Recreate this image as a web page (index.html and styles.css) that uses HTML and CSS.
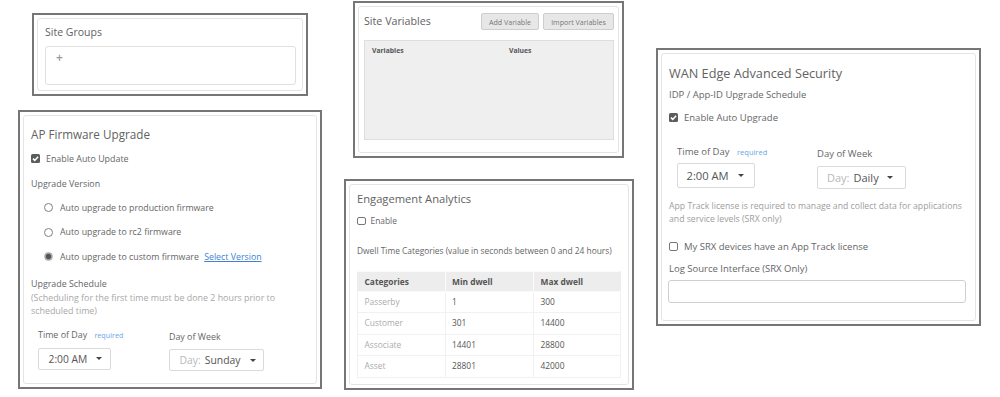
FILE: index.html
```html
<!DOCTYPE html>
<html lang="en">
<head>
<meta charset="utf-8">
<title>Site settings</title>
<link rel="stylesheet" href="styles.css">
</head>
<body>
<div class="canvas">

  <section class="shot shot-groups">
    <div class="card card-groups">
      <h2 class="title title-groups">Site Groups</h2>
      <div class="group-box"><span class="plus">+</span></div>
    </div>
  </section>

  <section class="shot shot-firmware">
    <div class="card card-firmware">
      <h2 class="title title-firmware">AP Firmware Upgrade</h2>
      <label class="check-row fw-check">
        <span class="cb cb-on"><svg viewBox="0 0 10 10"><path d="M2.2 5.1 L4.2 7.1 L7.9 3" stroke="#fff" stroke-width="1.7" fill="none"/></svg></span>
        <span>Enable Auto Update</span>
      </label>
      <div class="text-row">Upgrade Version</div>
      <div class="radio-list">
        <label class="radio-row"><span class="radio"></span><span>Auto upgrade to production firmware</span></label>
        <label class="radio-row"><span class="radio"></span><span>Auto upgrade to rc2 firmware</span></label>
        <label class="radio-row"><span class="radio radio-on"></span><span>Auto upgrade to custom firmware <a class="link" href="#">Select Version</a></span></label>
      </div>
      <div class="text-row schedule-head">Upgrade Schedule</div>
      <div class="note fw-note">(Scheduling for the first time must be done 2 hours prior to<br>scheduled time)</div>
      <div class="fields fw-fields">
        <div class="field field-time fw-time">
          <div class="field-label">Time of Day <span class="required">required</span></div>
          <div class="select fw-select-time"><span class="select-value">2:00 AM</span><span class="caret"></span></div>
        </div>
        <div class="field field-day">
          <div class="field-label">Day of Week</div>
          <div class="select fw-select-day"><span class="select-prefix">Day:</span><span class="select-value">Sunday</span><span class="caret"></span></div>
        </div>
      </div>
    </div>
  </section>

  <section class="shot shot-vars">
    <div class="card card-vars">
      <div class="vars-head">
        <h2 class="title title-vars">Site Variables</h2>
        <div class="btns">
          <button class="btn btn-add">Add Variable</button>
          <button class="btn btn-import">Import Variables</button>
        </div>
      </div>
      <div class="vars-area">
        <div class="vars-cols"><span class="vars-col1">Variables</span><span>Values</span></div>
      </div>
    </div>
  </section>

  <section class="shot shot-engage">
    <div class="card card-engage">
      <h2 class="title title-engage">Engagement Analytics</h2>
      <label class="check-row en-check">
        <span class="cb cb-off cb-small"></span>
        <span>Enable</span>
      </label>
      <div class="dwell">Dwell Time Categories (value in seconds between 0 and 24 hours)</div>
      <table class="dwell-table">
        <thead>
          <tr><th>Categories</th><th>Min dwell</th><th>Max dwell</th></tr>
        </thead>
        <tbody>
          <tr><td>Passerby</td><td>1</td><td>300</td></tr>
          <tr><td>Customer</td><td>301</td><td>14400</td></tr>
          <tr><td>Associate</td><td>14401</td><td>28800</td></tr>
          <tr><td>Asset</td><td>28801</td><td>42000</td></tr>
        </tbody>
      </table>
    </div>
  </section>

  <section class="shot shot-wan">
    <div class="card card-wan">
      <h2 class="title title-wan">WAN Edge Advanced Security</h2>
      <div class="sub">IDP / App-ID Upgrade Schedule</div>
      <label class="check-row wan-check">
        <span class="cb cb-on"><svg viewBox="0 0 10 10"><path d="M2.2 5.1 L4.2 7.1 L7.9 3" stroke="#fff" stroke-width="1.7" fill="none"/></svg></span>
        <span>Enable Auto Upgrade</span>
      </label>
      <div class="fields wan-fields">
        <div class="field field-time wan-time">
          <div class="field-label">Time of Day <span class="required">required</span></div>
          <div class="select wan-select-time"><span class="select-value">2:00 AM</span><span class="caret"></span></div>
        </div>
        <div class="field field-day">
          <div class="field-label">Day of Week</div>
          <div class="select wan-select-day"><span class="select-prefix">Day:</span><span class="select-value">Daily</span><span class="caret"></span></div>
        </div>
      </div>
      <div class="note wan-note">App Track license is required to manage and collect data for applications<br>and service levels (SRX only)</div>
      <label class="check-row wan-check2">
        <span class="cb cb-off"></span>
        <span>My SRX devices have an App Track license</span>
      </label>
      <div class="text-row log-label">Log Source Interface (SRX Only)</div>
      <div class="text-input"></div>
    </div>
  </section>

</div>
</body>
</html>
```

FILE: styles.css
```css
html, body {
  margin: 0;
  padding: 0;
  background: #fff;
}

body {
  font-family: "Open Sans", "Noto Sans", sans-serif;
  color: #666;
}

.canvas {
  position: relative;
  width: 1000px;
  height: 397px;
  overflow: hidden;
}

/* each screenshot window lies on a free canvas */
.shot {
  position: absolute;
  box-sizing: border-box;
  border: 2px solid #767676;
  padding: 3px;
  background: #fff;
}

.shot-groups   { left: 32px;  top: 13px;  width: 276px; height: 83px; }
.shot-firmware { left: 18px;  top: 110px; width: 304px; height: 279px; }
.shot-vars     { left: 353px; top: 1px;   width: 271px; height: 157px; }
.shot-engage   { left: 344px; top: 179px; width: 290px; height: 211px; }
.shot-wan      { left: 656px; top: 48px;  width: 325px; height: 278px; }

.card {
  box-sizing: border-box;
  height: 100%;
  border: 1px solid #e4e4e4;
  border-radius: 3px;
  background: #fff;
}

.title {
  margin: 0;
  font-weight: 400;
  color: #626262;
}

/* ---------- Site Groups ---------- */
.card-groups { padding: 6px 6px 0 7px; }
.title-groups { font-size: 10.5px; line-height: 15px; margin-bottom: 6px; }
.group-box {
  box-sizing: border-box;
  height: 39px;
  border: 1px solid #e0e0e0;
  border-radius: 3px;
  padding: 5px 0 0 10px;
}
.plus {
  display: block;
  font-size: 12px;
  line-height: 12px;
  font-weight: 600;
  color: #999;
}

/* ---------- shared controls ---------- */
.check-row {
  display: flex;
  align-items: center;
  gap: 6px;
  font-size: 8.9px;
  line-height: 16px;
  color: #666;
}

.cb {
  box-sizing: border-box;
  width: 9px;
  height: 9px;
  flex: none;
  border-radius: 1.5px;
}
.cb svg { display: block; width: 9px; height: 9px; }
.cb-on { background: #5c5c5c; }
.cb-off { border: 1px solid #777; border-radius: 2px; background: #fff; }
.cb-small { width: 8.5px; height: 8px; }

.text-row {
  font-size: 8.9px;
  line-height: 16px;
  color: #666;
}

.note {
  font-size: 8.9px;
  line-height: 13.5px;
  color: #a8a8a8;
}

.fields { display: flex; }
.field-label {
  font-size: 8.9px;
  line-height: 14px;
  color: #666;
}
.required {
  margin-left: 5px;
  font-size: 7.2px;
  color: #69a6e6;
}
.field-day { padding-top: 2.5px; }

.select {
  display: flex;
  align-items: center;
  box-sizing: border-box;
  border: 1px solid #dadada;
  border-radius: 2px;
  background: #fff;
  color: #555;
}
.select-prefix { color: #b8b8b8; margin-right: 4px; }
.caret {
  width: 0;
  height: 0;
  border-left: 3px solid transparent;
  border-right: 3px solid transparent;
  border-top: 3.5px solid #444;
}

/* ---------- AP Firmware ---------- */
.card-firmware { padding: 8.5px 7px 0 7px; }
.title-firmware { font-size: 11.7px; line-height: 18px; margin-bottom: 8px; }
.fw-check { margin-bottom: 9px; }
.radio-list {
  display: flex;
  flex-direction: column;
  gap: 8.5px;
  margin-top: 8px;
  padding-left: 13px;
}
.radio-row {
  display: flex;
  align-items: center;
  gap: 7px;
  font-size: 8.8px;
  line-height: 16px;
  color: #666;
}
.radio {
  box-sizing: border-box;
  width: 9px;
  height: 9px;
  flex: none;
  border: 1px solid #808080;
  border-radius: 50%;
  background: #fff;
}
.radio-on {
  background: radial-gradient(circle, #555 0 2.4px, #a0a0a0 2.9px);
  border-color: #b0b0b0;
}
.link {
  margin-left: 3px;
  color: #3f7fd6;
  text-decoration: underline;
}
.schedule-head { margin-top: 12px; line-height: 14px; }
.fw-fields { margin-top: 10px; padding-left: 7px; }
.fw-time { width: 131px; }
.fw-select-time {
  width: 73px;
  height: 22px;
  margin-top: 6px;
  padding-left: 9.5px;
  font-size: 10.3px;
}
.fw-select-time .caret { margin-left: 9px; }
.fw-select-day {
  width: 95px;
  height: 22px;
  margin-top: 5px;
  padding-left: 9.5px;
  font-size: 10.4px;
}
.fw-select-day .caret { margin-left: 9px; }

/* ---------- Site Variables ---------- */
.card-vars { padding: 6px 4px 0 5px; }
.vars-head {
  display: flex;
  justify-content: space-between;
  align-items: flex-start;
}
.title-vars { font-size: 10.7px; line-height: 16px; }
.btns { display: flex; gap: 4px; }
.btn {
  box-sizing: border-box;
  height: 17px;
  padding: 0;
  border: 1px solid #cdcdcd;
  border-radius: 2px;
  background: #e7e7e7;
  font-family: "Open Sans", "Noto Sans", sans-serif;
  font-size: 7.1px;
  color: #777;
}
.btn-add { width: 58px; }
.btn-import { width: 71px; }
.vars-area {
  box-sizing: border-box;
  height: 100px;
  margin-top: 10px;
  border: 1px solid #dedede;
  background: #efefef;
  padding: 5px 0 0 7px;
}
.vars-cols {
  display: flex;
  font-size: 6.8px;
  line-height: 10px;
  font-weight: 700;
  color: #555;
}
.vars-col1 { width: 137px; }

/* ---------- Engagement Analytics ---------- */
.card-engage { padding: 4.5px 7px 0 7px; }
.title-engage { font-size: 11.2px; line-height: 17px; }
.en-check { margin-top: 7.5px; line-height: 14px; gap: 5px; font-size: 8.4px; }
.dwell {
  margin-top: 15.5px;
  font-size: 8.4px;
  line-height: 13px;
  color: #666;
}
.dwell-table {
  margin-top: 14px;
  width: 264px;
  border-collapse: collapse;
  table-layout: fixed;
  font-size: 8.4px;
}
.dwell-table th,
.dwell-table td {
  padding: 0 0 0 6.5px;
  text-align: left;
  border: 1px solid #f1f1f1;
}
.dwell-table th {
  height: 19px;
  line-height: 17px;
  background: #ededed;
  border-color: #fafafa;
  font-weight: 700;
  color: #555;
}
.dwell-table th:first-child { width: 80px; border-left-color: #ededed; }
.dwell-table th:nth-child(2) { width: 81px; }
.dwell-table th:last-child { border-right-color: #ededed; }
.dwell-table td {
  height: 20.5px;
  line-height: 18px;
  color: #555;
}
.dwell-table td:first-child { color: #ababab; }

/* ---------- WAN Edge ---------- */
.card-wan { padding: 9.5px 7px 0 7px; }
.title-wan { font-size: 12.7px; line-height: 18px; }
.sub {
  margin-top: 6.5px;
  font-size: 9.5px;
  line-height: 14px;
  color: #666;
}
.wan-check { margin-top: 7.5px; font-size: 9.5px; }
.wan-fields { margin-top: 19px; padding-left: 8px; }
.wan-fields .field-label { font-size: 9.5px; }
.wan-fields .required { font-size: 7.5px; }
.wan-time { width: 140px; }
.wan-select-time {
  width: 78px;
  height: 25px;
  margin-top: 4px;
  padding-left: 8.5px;
  font-size: 11.2px;
}
.wan-select-time .caret { margin-left: 9px; }
.wan-select-day {
  width: 89px;
  height: 23px;
  margin-top: 4.5px;
  padding-left: 9px;
  font-size: 11px;
}
.wan-select-day .caret { margin-left: 8px; }
.wan-note {
  margin-top: 11.5px;
  font-size: 8.7px;
  line-height: 13.3px;
  color: #9d9d9d;
}
.wan-check2 { margin-top: 12px; font-size: 9.5px; }
.log-label { margin-top: 7px; font-size: 9.5px; line-height: 14px; }
.text-input {
  box-sizing: border-box;
  width: 298px;
  height: 23px;
  margin-top: 4px;
  margin-left: -1px;
  border: 1px solid #cfcfcf;
  border-radius: 3px;
  background: #fff;
}
```
